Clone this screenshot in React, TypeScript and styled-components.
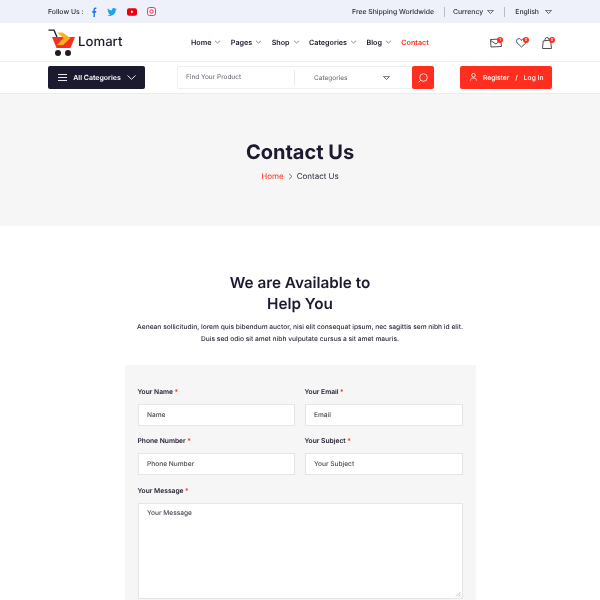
import React from "react";
import styled, { createGlobalStyle } from "styled-components";

const Global = createGlobalStyle`
  html, body { margin: 0; padding: 0; background: #fff; }
  html { overflow: hidden; }
  body {
    font-family: Inter, "Open Sans", "Liberation Sans", sans-serif;
    color: #1c1a2e;
    text-rendering: geometricPrecision;
  }
  * { box-sizing: border-box; }
  svg { flex-shrink: 0; display: block; }
`;

const Page = styled.div`
  width: 600px;
  height: 600px;
  overflow: hidden;
  will-change: transform;
`;
const Container = styled.div`
  width: 504px;
  margin: 0 auto;
  height: 100%;
  display: flex;
  align-items: center;
  justify-content: space-between;
`;
const TopBar = styled.div`
  height: 23px;
  background: #eef1fa;
`;
const Group = styled.div`
  display: flex;
  align-items: center;
`;
const TopText = styled.span`
  font-size: 6.85px;
  font-weight: 500;
  color: #2b2a3a;
  white-space: nowrap;
`;
const Socials = styled(Group)`
  margin-left: 7px;
  gap: 10.3px;
`;
const LangGroup = styled(Group)<{ $left: number; $gap: number }>`
  gap: ${(p) => p.$gap}px;
  margin-left: ${(p) => p.$left}px;
`;
const Divider = styled.span`
  width: 1px;
  height: 10px;
  background: #b8bcc8;
  margin-right: 4px;
`;
const Header = styled.div`
  height: 39px;
  background: #fff;
  border-bottom: 1px solid #ececec;
`;
const Logo = styled.div`
  display: flex;
  align-items: center;
  gap: 3px;
  font-size: 13.2px;
  font-weight: 500;
  color: #1c1a2e;
  width: 102px;
`;
const Nav = styled.nav`
  display: flex;
  align-items: center;
  gap: 9.4px;
  margin-left: 41px;
`;
const NavItem = styled.span<{ $active?: boolean }>`
  display: flex;
  align-items: center;
  gap: 3px;
  font-size: 7.2px;
  font-weight: 600;
  white-space: nowrap;
  color: ${(p) => (p.$active ? "#ff2e1f" : "#1c1a2e")};
`;
const IconRow = styled.div`
  display: flex;
  align-items: center;
  gap: 14px;
  margin-left: auto;
  margin-right: -2px;
`;
const IconWrap = styled.span`
  position: relative;
  display: block;
  width: 12px;
  height: 12px;
`;
const Badge = styled.span`
  position: absolute;
  top: 1px;
  right: -1px;
  width: 6px;
  height: 6px;
  border-radius: 50%;
  background: #ff2e1f;
  color: #fff;
  font-size: 4px;
  line-height: 6px;
  text-align: center;
`;
const SearchRow = styled.div`
  height: 32px;
  border-bottom: 1px solid #ececec;
`;
const CategoryButton = styled.div`
  width: 97px;
  height: 23px;
  background: #1c1a2e;
  border-radius: 2px;
  color: #fff;
  font-size: 7px;
  font-weight: 600;
  display: flex;
  align-items: center;
  padding: 0 9px 0 10px;
  gap: 6px;
  white-space: nowrap;
  justify-content: space-between;
`;
const SearchBox = styled.div`
  display: flex;
  height: 23px;
  width: 257px;
  margin-left: 32px;
`;
const SearchField = styled.div`
  flex: 1;
  display: flex;
  align-items: center;
  border: 1px solid #efefef;
  border-right: none;
  border-radius: 2px 0 0 2px;
  font-size: 6.5px;
  color: #62626c;
`;
const SearchInput = styled.span`
  width: 117px;
  padding-left: 8px;
  height: 15px;
  line-height: 15px;
  border-right: 1px solid #e8e8e8;
`;
const SearchCat = styled.span`
  flex: 1;
  display: flex;
  justify-content: space-between;
  align-items: center;
  padding: 0 22px 0 19px;
`;
const SearchBtn = styled.div`
  width: 22px;
  background: #ff2e1f;
  border-radius: 2px;
  display: flex;
  align-items: center;
  justify-content: center;
`;
const AuthButton = styled.div`
  width: 92px;
  height: 23px;
  margin-left: auto;
  background: #ff2e1f;
  border-radius: 2px;
  color: #fff;
  font-size: 6.7px;
  font-weight: 500;
  display: flex;
  align-items: center;
  padding-left: 10px;
  white-space: nowrap;
`;
const AuthIcon = styled.svg`
  margin-right: 6px;
  margin-top: -2px;
`;
const Slash = styled.span`
  margin: 0 6px;
`;
const Banner = styled.div`
  height: 132px;
  background: #f6f6f6;
  display: flex;
  flex-direction: column;
  align-items: center;
  padding-top: 45px;
`;
const BannerTitle = styled.h1`
  margin: 0;
  font-size: 20px;
  line-height: 26px;
  font-weight: 700;
  color: #1c1a2e;
`;
const Crumbs = styled.div`
  margin-top: 5px;
  display: flex;
  align-items: center;
  gap: 4px;
  font-size: 8px;
  line-height: 12px;
  color: #2b2a3a;
`;
const CrumbLink = styled.span`
  color: #ff2e1f;
`;
const Section = styled.section`
  display: flex;
  flex-direction: column;
  align-items: center;
  padding-top: 46px;
`;
const Title = styled.h2`
  margin: 0;
  font-size: 15.3px;
  line-height: 21px;
  font-weight: 600;
  text-align: center;
  color: #1c1a2e;
`;
const Lead = styled.p`
  margin: 7px 0 0;
  width: 350px;
  font-size: 6.65px;
  line-height: 12px;
  font-weight: 500;
  text-align: center;
  color: #2b2a3a;
  white-space: nowrap;
  display: flex;
  flex-direction: column;
  align-items: center;
`;
const Card = styled.div`
  margin-top: 20px;
  width: 351px;
  height: 260px;
  background: #f6f6f6;
  padding: 22px 13px 0;
  display: grid;
  grid-template-columns: 157px 158px;
  column-gap: 10px;
  align-content: start;
`;
const Field = styled.div<{ $wide?: boolean }>`
  grid-column: ${(p) => (p.$wide ? "1 / -1" : "auto")};
  height: 49px;
  margin-top: ${(p) => (p.$wide ? "1px" : "0")};
`;
const Label = styled.div`
  font-size: 6.7px;
  line-height: 10px;
  font-weight: 600;
  color: #1c1a2e;
  margin-bottom: 7px;
`;
const Star = styled.span`
  color: #ff2e1f;
  margin-left: 1.5px;
`;
const Input = styled.div`
  height: 22px;
  background: #fff;
  border: 1px solid #e6e6e6;
  font-size: 6.6px;
  line-height: 20px;
  padding-left: 8.5px;
  color: #4a4a54;
  font-weight: 500;
`;
const TextArea = styled.div`
  position: relative;
  height: 96px;
  background: #fff;
  border: 1px solid #e6e6e6;
  font-size: 6.6px;
  line-height: 10px;
  padding: 4px 8.5px;
  color: #4a4a54;
  font-weight: 500;
`;
const Grip = styled.svg`
  position: absolute;
  right: 1px;
  bottom: 1px;
`;

const Caret = () => (
  <svg width="7" height="4" viewBox="0 0 7 4" fill="none">
    <path d="M1 .8 3.500 3 6 .8" stroke="#6a6a74" strokeWidth=".8" />
  </svg>
);
const Tri = () => (
  <svg width="7" height="4" viewBox="0 0 7 4" fill="none">
    <path d="M.5.3h6L3.500 3.600z" stroke="#55555f" strokeWidth=".9" />
  </svg>
);

const Labelled = ({ label }: { label: string }) => (
  <Label>
    {label}
    <Star>*</Star>
  </Label>
);

export default function App() {
  return (
    <Page>
      <Global />
      <TopBar>
        <Container>
          <Group>
            <TopText>Follow Us :</TopText>
            <Socials>
              <svg width="6" height="10" viewBox="0 0 8 11" preserveAspectRatio="none">
                <path d="M5.200 11V6.200h1.600l.3-1.900H5.200V3.200c0-.6.2-.9.9-.9h1V.6C6.800.5 6.300.5 5.800.5 4.300.5 3.300 1.400 3.300 3v1.300H1.600v1.900h1.700V11z" fill="#1877f2" />
              </svg>
              <svg width="10" height="8" viewBox="0 0 24 20">
                <path d="M24 2.400a9.800 9.800 0 0 1-2.800.8A4.900 4.900 0 0 0 23.300.5a9.800 9.800 0 0 1-3.100 1.200 4.900 4.900 0 0 0-8.400 4.500A14 14 0 0 1 1.700 1 4.900 4.900 0 0 0 3.200 7.600a4.900 4.900 0 0 1-2.200-.6 4.900 4.900 0 0 0 3.900 4.900 4.900 4.900 0 0 1-2.200.1 4.900 4.900 0 0 0 4.600 3.400A9.900 9.900 0 0 1 0 17.400 14 14 0 0 0 21.500 5a10 10 0 0 0 2.500-2.600z" fill="#1da1f2" />
              </svg>
              <svg width="10" height="8" viewBox="0 0 10 8">
                <rect width="10" height="7.500" y=".2" rx="2" fill="#e60012" />
                <path d="M4 2.300v3.100l2.600-1.550z" fill="#fff" />
              </svg>
              <svg width="9" height="9" viewBox="0 0 9 9" fill="none">
                <defs>
                  <linearGradient id="ig" x1="0" y1="9" x2="9" y2="0">
                    <stop offset="0" stopColor="#fdb13a" />
                    <stop offset=".5" stopColor="#f0364f" />
                    <stop offset="1" stopColor="#b62fc0" />
                  </linearGradient>
                </defs>
                <rect x=".5" y=".5" width="8" height="8" rx="2.200" stroke="url(#ig)" />
                <circle cx="4.500" cy="4.500" r="1.700" stroke="url(#ig)" />
              </svg>
            </Socials>
          </Group>
          <Group>
            <TopText>Free Shipping Worldwide</TopText>
            <LangGroup $left={10} $gap={4}>
              <Divider />
              <TopText>Currency</TopText>
              <Tri />
            </LangGroup>
            <LangGroup $left={10} $gap={6}>
              <Divider />
              <TopText>English</TopText>
              <Tri />
            </LangGroup>
          </Group>
        </Container>
      </TopBar>

      <Header>
        <Container>
          <Logo>
            <svg width="27" height="27" viewBox="0 0 27 27" fill="none">
              <path d="M.5 1.200H6L9 8" stroke="#1c1a2e" strokeWidth="1.300" />
              <path d="M4 8h23l-4.500 11H8.500z" fill="#f5301e" />
              <path d="M9 3.500h5.500L22.500 9l-7.500 7H9l6.500-7z" fill="#fbb21f" />
              <circle cx="10" cy="24" r="3" fill="#1c1a2e" />
              <circle cx="20" cy="24" r="3" fill="#1c1a2e" />
            </svg>
            Lomart
          </Logo>
          <Nav>
            {["Home", "Pages", "Shop", "Categories", "Blog"].map((n) => (
              <NavItem key={n}>
                {n} <Caret />
              </NavItem>
            ))}
            <NavItem $active>Contact</NavItem>
          </Nav>
          <IconRow>
            <IconWrap>
              <svg width="12" height="12" viewBox="0 0 12 12" fill="none" stroke="#3a3a45" strokeWidth=".9">
                <path d="M.5 3.500 10.500 3l1 7.500-10.500.5z" />
                <path d="M.7 4.500 6 8l5-4.500" />
              </svg>
              <Badge>1</Badge>
            </IconWrap>
            <IconWrap>
              <svg width="12" height="12" viewBox="0 0 12 12" fill="none" stroke="#3a3a45" strokeWidth=".9">
                <path d="M5.500 11 1.200 7C-.2 5.200.7 2.600 2.800 2.600 4.100 2.600 4.900 3.400 5.500 4.500 6.100 3.400 6.900 2.600 8.200 2.600c2.100 0 3 2.600 1.600 4.400z" />
              </svg>
              <Badge>0</Badge>
            </IconWrap>
            <IconWrap>
              <svg width="12" height="13" viewBox="0 0 12 13" fill="none" stroke="#3a3a45" strokeWidth=".9">
                <path d="M1.200 5 8.500 4l1 8.500H.5z" />
                <path d="M3 5V3.500a2 2 0 0 1 4 0V5" />
              </svg>
              <Badge>0</Badge>
            </IconWrap>
          </IconRow>
        </Container>
      </Header>

      <SearchRow>
        <Container>
          <CategoryButton>
            <svg width="9" height="7" viewBox="0 0 9 7" stroke="#fff" strokeWidth=".9">
              <path d="M0 .5h9M0 3.500h9M0 6.500h9" />
            </svg>
            All Categories
            <svg width="9" height="5" viewBox="0 0 9 5" fill="none" stroke="#fff" strokeWidth=".9">
              <path d="M.5.500 4.500 4.300 8.500.500" />
            </svg>
          </CategoryButton>
          <SearchBox>
            <SearchField>
              <SearchInput>Find Your Product</SearchInput>
              <SearchCat>
                Categories
                <Tri />
              </SearchCat>
            </SearchField>
            <SearchBtn>
              <svg width="10" height="10" viewBox="0 0 10 10" fill="none" stroke="#fff" strokeWidth=".8">
                <circle cx="5.500" cy="4.500" r="3.800" />
                <path d="M2.800 7.200.6 9.400" />
              </svg>
            </SearchBtn>
          </SearchBox>
          <AuthButton>
            <AuthIcon width="7" height="8" viewBox="0 0 7 8" fill="none" stroke="#fff" strokeWidth=".8">
              <circle cx="3.500" cy="2.200" r="1.800" />
              <path d="M.5 7.500C.5 5.500 2 5 3.500 5s3 .5 3 2.500" />
            </AuthIcon>
            Register
            <Slash>/</Slash>
            Log In
          </AuthButton>
        </Container>
      </SearchRow>

      <Banner>
        <BannerTitle>Contact Us</BannerTitle>
        <Crumbs>
          <CrumbLink>Home</CrumbLink>
          <svg width="5" height="7" viewBox="0 0 5 7" fill="none" stroke="#55555f" strokeWidth=".8">
            <path d="M1 .8 4 3.500 1 6.200" />
          </svg>
          Contact Us
        </Crumbs>
      </Banner>

      <Section>
        <Title>
          We are Available to
          <br />
          Help You
        </Title>
        <Lead>
          <span>Aenean sollicitudin, lorem quis bibendum auctor, nisi elit consequat ipsum, nec sagittis sem nibh id elit.</span>
          <span>Duis sed odio sit amet nibh vulputate cursus a sit amet mauris.</span>
        </Lead>
        <Card>
          <Field>
            <Labelled label="Your Name" />
            <Input>Name</Input>
          </Field>
          <Field>
            <Labelled label="Your Email" />
            <Input>Email</Input>
          </Field>
          <Field>
            <Labelled label="Phone Number" />
            <Input>Phone Number</Input>
          </Field>
          <Field>
            <Labelled label="Your Subject" />
            <Input>Your Subject</Input>
          </Field>
          <Field $wide>
            <Labelled label="Your Message" />
            <TextArea>
              Your Message
              <Grip width="6" height="6" viewBox="0 0 6 6" stroke="#999" strokeWidth=".6">
                <path d="M1 5.500 5.500 1M3.500 5.500l2-2" />
              </Grip>
            </TextArea>
          </Field>
        </Card>
      </Section>
    </Page>
  );
}
